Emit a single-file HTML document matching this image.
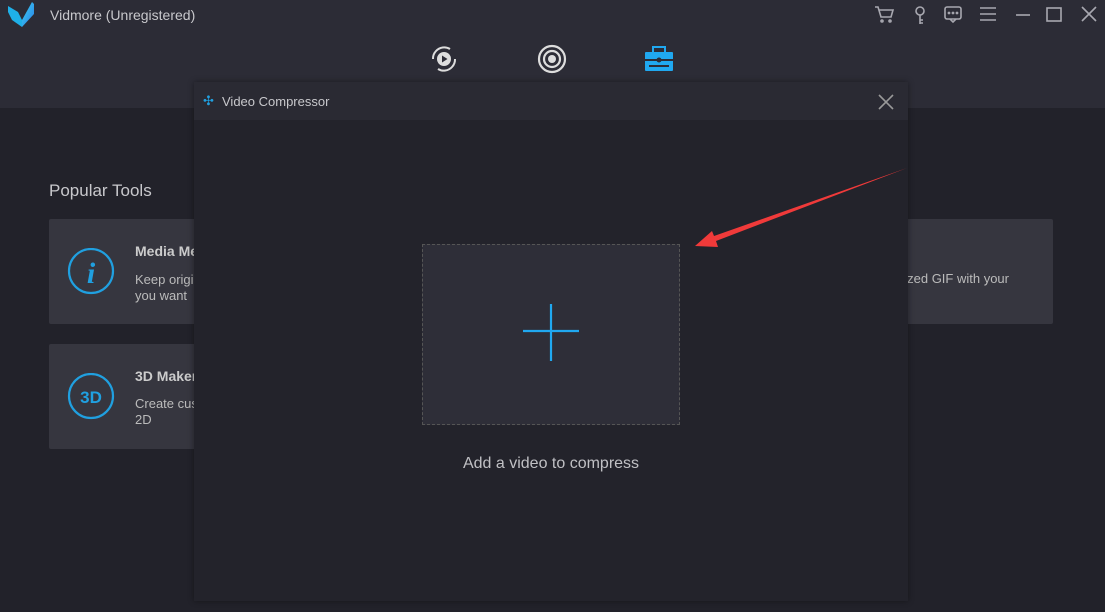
<!DOCTYPE html>
<html><head><meta charset="utf-8"><style>
*{margin:0;padding:0;box-sizing:border-box}
body{width:1105px;height:612px;overflow:hidden;background:#22222a;font-family:"Liberation Sans","DejaVu Sans",sans-serif;position:relative}
.hdr{position:absolute;left:0;top:0;width:1105px;height:108px;background:#2c2c36}
.abs{position:absolute}
.card{position:absolute;background:#36363f;border-radius:2px}
.t{color:#ccc}
</style></head><body>
<div class="hdr"></div>
<svg class="abs" style="left:8px;top:0" width="28" height="28" viewBox="0 0 28 28">
<defs><linearGradient id="g" x1="0" y1="0" x2="1" y2="1"><stop offset="0" stop-color="#3bd1f0"/><stop offset="1" stop-color="#2a7ee8"/></linearGradient></defs>
<path d="M0 6 L10 12 L14 20 L14 27 L4 20 L0 12Z" fill="#1fb0e8"/><path d="M14 20 L24 2 L26 4 L26 14 L14 27Z" fill="url(#g)"/></svg>
<div class="abs t" style="left:50px;top:7px;font-size:14px;color:#c8c8cc">Vidmore (Unregistered)</div>
<svg class="abs" style="left:870px;top:2px" width="235" height="26" viewBox="0 0 235 26" fill="none" stroke="#a8a8b0" stroke-width="1.6">
<path d="M5 5h3l3 10h10l2-7H9"/><circle cx="12" cy="19" r="1"/><circle cx="20" cy="19" r="1"/>
<circle cx="50" cy="9" r="4"/><path d="M50 13v9M50 18h3M50 21h3"/>
<rect x="75" y="5" width="16" height="12" rx="2"/><path d="M80 17l3 3 3-3"/><circle cx="79" cy="11" r=".6"/><circle cx="83" cy="11" r=".6"/><circle cx="87" cy="11" r=".6"/>
<path d="M110 6h16M110 12h16M110 18h16"/>
<path d="M146 13h14"/>
<rect x="177" y="6" width="14" height="13"/>
<path d="M212 5l14 14M226 5l-14 14"/>
</svg>
<svg class="abs" style="left:428px;top:43px" width="32" height="32" viewBox="0 0 32 32" fill="none" stroke="#ddd" stroke-width="2">
<path d="M8 8a11 11 0 0 1 14-2M24 24a11 11 0 0 1-14 2M5 16a11 11 0 0 1 3-8M27 16a11 11 0 0 1-3 8"/>
<circle cx="16" cy="16" r="7" fill="#ddd" stroke="none"/><path d="M14 12.5v7l5.5-3.5z" fill="#2c2c36" stroke="none"/></svg>
<svg class="abs" style="left:536px;top:43px" width="32" height="32" viewBox="0 0 32 32"><circle cx="16" cy="16" r="13" fill="none" stroke="#ddd" stroke-width="2.2"/><circle cx="16" cy="16" r="8" fill="none" stroke="#ddd" stroke-width="2.2"/><circle cx="16" cy="16" r="4" fill="#ddd"/></svg>
<svg class="abs" style="left:643px;top:45px" width="32" height="28" viewBox="0 0 32 28"><rect x="10" y="2" width="12" height="6" fill="none" stroke="#20a8f0" stroke-width="2"/><rect x="2" y="7" width="28" height="19" rx="1" fill="#20a8f0"/><path d="M2 15h28M6 21h20" stroke="#2c2c36" stroke-width="2"/><circle cx="16" cy="15" r="2.5" fill="#2c2c36"/></svg>
<div class="abs t" style="left:49px;top:181px;font-size:17px;color:#c8c8cc">Popular Tools</div>
<div class="card" style="left:49px;top:219px;width:160px;height:105px"></div>
<div class="card" style="left:49px;top:344px;width:160px;height:105px"></div>
<div class="card" style="left:880px;top:219px;width:173px;height:105px"></div>
<svg class="abs" style="left:67px;top:248px" width="50" height="50"><circle cx="24" cy="23" r="22" fill="none" stroke="#20a0e0" stroke-width="2.2"/><text x="24" y="35" text-anchor="middle" font-family="Liberation Serif" font-style="italic" font-weight="bold" font-size="30" fill="#20a0e0">i</text></svg>
<svg class="abs" style="left:67px;top:373px" width="50" height="50"><circle cx="24" cy="23" r="22" fill="none" stroke="#20a0e0" stroke-width="2.2"/><text x="24" y="30" text-anchor="middle" font-family="Liberation Sans" font-weight="bold" font-size="17" fill="#20a0e0">3D</text></svg>
<div class="abs" style="left:135px;top:243px;font-size:14px;font-weight:bold;color:#ccc">Media Metadata</div>
<div class="abs" style="left:135px;top:272px;font-size:13px;color:#bbb;line-height:16px">Keep original<br>you want</div>
<div class="abs" style="left:135px;top:368px;font-size:14px;font-weight:bold;color:#ccc">3D Maker</div>
<div class="abs" style="left:135px;top:396px;font-size:13px;color:#bbb;line-height:16px">Create custom<br>2D</div>
<div class="abs" style="right:96px;top:271px;font-size:13px;color:#bbb;white-space:nowrap">Make a customized GIF with your</div>
<div class="abs" style="left:194px;top:82px;width:714px;height:519px;background:#23232b;box-shadow:0 0 6px rgba(0,0,0,.4)">
<div style="height:38px;background:#2a2a33;position:relative">
<div class="abs" style="left:9px;top:11px;color:#20a0e0;font-size:13px">✣</div>
<div class="abs" style="left:28px;top:12px;font-size:13px;color:#c8c8cc">Video Compressor</div>
<svg class="abs" style="left:683px;top:11px" width="18" height="18"><path d="M2 2l14 14M16 2L2 16" stroke="#999" stroke-width="1.6"/></svg>
</div>
<div class="abs" style="left:228px;top:162px;width:258px;height:181px;background:#2e2e38;border:1px dashed #555"></div>
<svg class="abs" style="left:328px;top:220px" width="60" height="60"><path d="M29 2v57M1 29h56" stroke="#20a8f0" stroke-width="2.2"/></svg>
<div class="abs" style="left:0;width:714px;top:373px;text-align:center;font-size:16px;color:#c0c0c4">Add a video to compress</div>
</div>
<svg class="abs" style="left:0;top:0" width="1105" height="612"><path d="M907 168 L714 236 L712 231 L695 246 L718 247 L716 241 Z" fill="#f03a3a"/></svg>
</body></html>
